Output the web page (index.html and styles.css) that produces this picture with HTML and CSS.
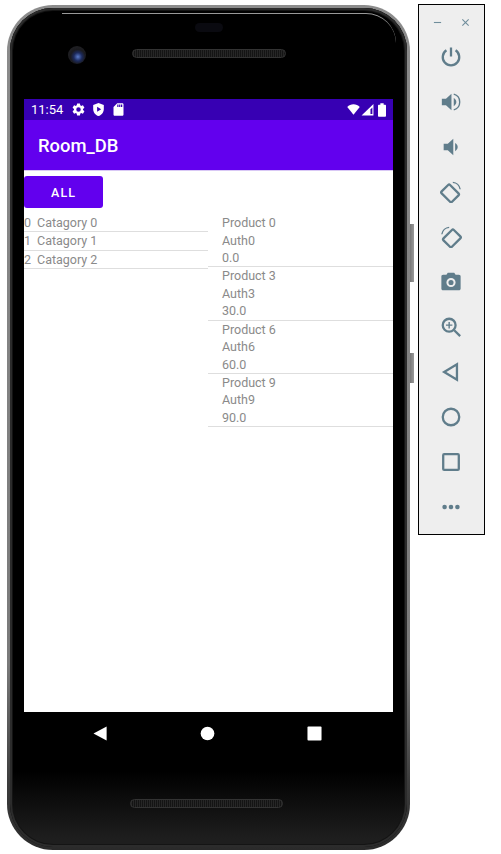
FILE: index.html

```html
<!DOCTYPE html>
<html>
<head>
<meta charset="UTF-8">
<title>Room_DB</title>
<link rel="stylesheet" href="styles.css">
</head>
<body>

	<div class="phone">
		<div class="edge-top"></div>
		<div class="side-key key-power"></div>
		<div class="side-key key-volume"></div>
		<div class="sensor"></div>
		<div class="camera"></div>
		<div class="speaker speaker-top"></div>

		<div class="screen">
			<div class="statusbar">
				<span class="clock">11:54</span>
				<svg class="st" viewBox="0 0 24 24"><path d="M19.14 12.94c.04-.3.06-.61.06-.94s-.02-.64-.07-.94l2.03-1.58a.49.49 0 0 0 .12-.61l-1.92-3.32a.49.49 0 0 0-.59-.22l-2.39.96c-.5-.38-1.03-.7-1.62-.94l-.36-2.54a.48.48 0 0 0-.48-.41h-3.84a.48.48 0 0 0-.47.41l-.36 2.54c-.59.24-1.13.57-1.62.94l-2.39-.96a.48.48 0 0 0-.59.22L2.74 8.87a.48.48 0 0 0 .12.61l2.03 1.58c-.05.3-.09.63-.09.94s.02.64.07.94l-2.03 1.58a.49.49 0 0 0-.12.61l1.92 3.32c.12.22.37.29.59.22l2.39-.96c.5.38 1.03.7 1.62.94l.36 2.54c.05.24.24.41.48.41h3.84c.24 0 .44-.17.47-.41l.36-2.54c.59-.24 1.13-.56 1.62-.94l2.39.96c.22.08.47 0 .59-.22l1.92-3.32a.48.48 0 0 0-.12-.61l-2.01-1.58zM12 15.6a3.6 3.6 0 1 1 0-7.2 3.6 3.6 0 0 1 0 7.2z"/></svg>
				<svg class="st" viewBox="0 0 24 24"><path fill-rule="evenodd" d="M12 1.500 3.500 4.800v6.400c0 5.200 3.600 10 8.500 11.300 4.900-1.300 8.500-6.100 8.500-11.300V4.800L12 1.500zM9.800 7.500v8l6.500-4-6.500-4z"/></svg>
				<svg class="st" viewBox="0 0 24 24"><path fill-rule="evenodd" d="M18 2h-8L4 8v12c0 1.100.9 2 2 2h12c1.100 0 2-.9 2-2V4c0-1.100-.9-2-2-2zM12 8h-2V4h2v4zm3 0h-2V4h2v4zm3 0h-2V4h2v4z"/></svg>
				<span class="st-space"></span>
				<svg class="st st-wifi" viewBox="0 0 24 24"><path d="M12 21.500 .5 7.500C3.500 4.300 7.500 2.500 12 2.500s8.500 1.800 11.500 5L12 21.500z"/></svg>
				<svg class="st st-signal" viewBox="0 0 24 24"><path d="M23 2v21H1L23 2z"/><path d="M17.500 12v8.500H21V8.500z" fill="#3700b3"/></svg>
				<svg class="st st-batt" viewBox="0 0 24 24"><path d="M16.500 4H14.500V2h-5v2H7.500C6.700 4 6 4.700 6 5.500v15C6 21.300 6.700 22 7.500 22h9c.8 0 1.500-.7 1.500-1.500v-15C18 4.700 17.300 4 16.500 4z"/></svg>
			</div>
			<div class="appbar">Room_DB</div>

			<div class="content">
				<button class="btn-all">ALL</button>
				<div class="lists">
					<div class="cat-list">
						<div class="cat-row"><span class="cat-id">0</span><span>Catagory 0</span></div>
						<div class="cat-row"><span class="cat-id">1</span><span>Catagory 1</span></div>
						<div class="cat-row"><span class="cat-id">2</span><span>Catagory 2</span></div>
					</div>
					<div class="prod-list">
						<div class="prod-row"><div>Product 0</div><div>Auth0</div><div>0.0</div></div>
						<div class="prod-row"><div>Product 3</div><div>Auth3</div><div>30.0</div></div>
						<div class="prod-row"><div>Product 6</div><div>Auth6</div><div>60.0</div></div>
						<div class="prod-row"><div>Product 9</div><div>Auth9</div><div>90.0</div></div>
					</div>
				</div>
			</div>
		</div>

		<div class="navbar">
			<svg class="nav-ico" viewBox="0 0 16 16"><path d="M14.500 .5v15L.5 8z"/></svg>
			<svg class="nav-ico" viewBox="0 0 16 16"><circle cx="8" cy="8" r="7.300"/></svg>
			<svg class="nav-ico" viewBox="0 0 16 16"><rect x=".5" y=".5" width="15" height="15" rx="1"/></svg>
		</div>

		<div class="speaker speaker-bottom"></div>
	</div>

	<div class="tools">
		<div class="tools-head">
			<svg class="head-ico" viewBox="0 0 10 10"><path d="M1 5h8"/></svg>
			<svg class="head-ico" viewBox="0 0 10 10"><path d="M1.500 1.500l7 7M8.500 1.500l-7 7"/></svg>
		</div>
		<div class="tool"><svg viewBox="0 0 24 24"><path class="line" d="M12 1.500v10M7 4.700a9 9 0 1 0 10 0"/></svg></div>
		<div class="tool"><svg viewBox="0 0 24 24"><path d="M2 8.500v7h4.500l6 5.500V3L6.500 8.500H2z"/><path d="M15 7.500c1.700 1 2.800 2.600 2.800 4.500s-1.100 3.500-2.800 4.500z"/><path class="line thin" d="M15 3.500c3.800 1 6.500 4.500 6.500 8.500s-2.700 7.500-6.500 8.500"/></svg></div>
		<div class="tool"><svg viewBox="0 0 24 24"><path d="M4 8.500v7h4.500l6 5.500V3L8.500 8.500H4z"/><path d="M16.500 7.500c1.700 1 2.800 2.600 2.800 4.500s-1.100 3.500-2.800 4.500z"/></svg></div>
		<div class="tool"><svg viewBox="0 0 24 24"><rect class="line" x="4.500" y="5.500" width="13" height="16" rx="1.500" transform="rotate(-45 11 13.500)"/><path class="line thin" d="M14 1.500c4 .3 7.300 3.500 8 7.500"/></svg></div>
		<div class="tool"><svg viewBox="0 0 24 24"><rect class="line" x="6.500" y="5.500" width="13" height="16" rx="1.500" transform="rotate(45 13 13.500)"/><path class="line thin" d="M10 1.500c-4 .3-7.300 3.500-8 7.500"/></svg></div>
		<div class="tool"><svg viewBox="0 0 24 24"><path fill-rule="evenodd" d="M8.500 2 7 4H3.500C2.100 4 1.500 4.800 1.500 6v13c0 1.200.6 2 2 2h17c1.400 0 2-.8 2-2V6c0-1.200-.6-2-2-2H17l-1.500-2h-7zM12 7.500a5 5 0 1 1 0 10 5 5 0 0 1 0-10zm0 2.200a2.800 2.800 0 1 0 0 5.600 2.800 2.800 0 0 0 0-5.600z"/></svg></div>
		<div class="tool"><svg viewBox="0 0 24 24"><circle class="line" cx="10" cy="10" r="7"/><path class="line" d="M15.500 15.500l6.500 6.500"/><path class="line thin" d="M10 6.500v7M6.500 10h7"/></svg></div>
		<div class="tool"><svg viewBox="0 0 24 24"><path class="line" d="M18.500 3.500v17L4.500 12z"/></svg></div>
		<div class="tool"><svg viewBox="0 0 24 24"><circle class="line" cx="12" cy="12" r="9"/></svg></div>
		<div class="tool"><svg viewBox="0 0 24 24"><rect class="line" x="3.500" y="3.500" width="17" height="17" rx="1"/></svg></div>
		<div class="tool"><svg viewBox="0 0 24 24"><circle cx="5" cy="12" r="2.500"/><circle cx="12" cy="12" r="2.500"/><circle cx="19" cy="12" r="2.500"/></svg></div>
	</div>

</body>
</html>
```

FILE: styles.css

```css
html, body {
	margin: 0;
	padding: 0;
	background: #fff;
}

body {
	width: 501px;
	height: 854px;
	overflow: hidden;
	display: flex;
	align-items: flex-start;
	font-family: Roboto, "Liberation Sans", sans-serif;
}

/* phone body */
.phone {
	position: relative;
	box-sizing: border-box;
	width: 403px;
	height: 845px;
	margin: 5px 0 0 7px;
	padding: 91px 14px 0 14px;
	border: 3px solid transparent;
	border-radius: 46px;
	background:
		linear-gradient(#000 0, #000 91%, #1e1e1e 99%) padding-box,
		linear-gradient(#8c8c8c 0, #7a7a7a 78%, #3c3c3c 92%, #2a2a2a 100%) border-box;
	box-shadow: inset 0 0 0 2px #2c2c2c, inset 0 0 0 3px #141414;
}

.edge-top {
	position: absolute;
	left: 52px;
	right: 11px;
	top: 5px;
	height: 30px;
	box-sizing: border-box;
	border-top: 1px solid #999;
	border-radius: 0 30px 0 0;
}

.side-key {
	position: absolute;
	left: 400px;
	width: 4px;
	background: linear-gradient(90deg, #777, #999);
}

.key-power {
	top: 216px;
	height: 58px;
}

.key-volume {
	top: 345px;
	height: 30px;
}

.sensor {
	position: absolute;
	left: 185px;
	top: 15px;
	width: 28px;
	height: 9px;
	border-radius: 5px;
	background: #0a0a10;
}

.camera {
	position: absolute;
	left: 58px;
	top: 38px;
	width: 18px;
	height: 18px;
	border-radius: 50%;
	background: radial-gradient(circle at 55% 60%, #5a7ac8 0, #1c2a5c 28%, #1a1a1e 50%, #26262a 100%);
}

.speaker {
	position: absolute;
	box-sizing: border-box;
	height: 9px;
	border: 1px solid #333;
	border-radius: 5px;
	background: repeating-linear-gradient(90deg, #262626 0, #262626 1px, #141414 1px, #141414 2px);
}

.speaker-top {
	left: 122px;
	top: 41px;
	width: 154px;
}

.speaker-bottom {
	left: 120px;
	top: 791px;
	width: 153px;
}

/* device screen */
.screen {
	width: 369px;
	height: 613px;
	background: #fff;
	display: flex;
	flex-direction: column;
}

.statusbar {
	flex: none;
	height: 21px;
	padding: 0 3px 0 7px;
	background: #3700b3;
	color: #fff;
	display: flex;
	align-items: center;
	font-size: 13px;
}

.clock {
	margin-right: 8px;
}

.st {
	width: 15px;
	height: 15px;
	margin-right: 5px;
	fill: #fff;
}

.st-space {
	flex: 1;
}

.st-wifi, .st-signal {
	width: 13px;
	height: 13px;
	margin-right: 1px;
}

.st-signal {
	margin-right: 0;
}

.st-batt {
	width: 16px;
	height: 16px;
	margin-right: 0;
}

.appbar {
	flex: none;
	box-sizing: border-box;
	height: 51px;
	padding: 0 14px;
	background: #6200ee;
	border-bottom: 1px solid #d9c8f5;
	color: #fff;
	font-size: 18.400px;
	font-weight: 500;
	line-height: 52px;
}

.content {
	flex: 1;
	padding-top: 5px;
}

.btn-all {
	display: block;
	width: 79px;
	height: 32px;
	margin: 0;
	padding: 0;
	border: 0;
	border-radius: 3px;
	background: #6200ee;
	color: #fff;
	font-family: inherit;
	font-size: 12.500px;
	font-weight: 500;
	letter-spacing: 1px;
}

.lists {
	display: flex;
	margin-top: 6px;
	color: #8a8a8a;
	font-size: 12.500px;
}

.cat-list {
	width: 184px;
}

.prod-list {
	width: 185px;
}

.cat-row {
	box-sizing: border-box;
	height: 18.300px;
	display: flex;
	align-items: center;
	border-bottom: 1px solid #dedede;
}

.cat-id {
	width: 13px;
}

.prod-row {
	box-sizing: border-box;
	height: 53.300px;
	padding-left: 14px;
	border-bottom: 1px solid #dedede;
	line-height: 17.500px;
}

/* bottom nav keys */
.navbar {
	height: 42px;
	padding: 0 71px 0 69px;
	display: flex;
	align-items: center;
	justify-content: space-between;
}

.nav-ico {
	width: 15px;
	height: 15px;
	fill: #fff;
}

/* emulator tool panel */
.tools {
	box-sizing: border-box;
	width: 67px;
	height: 531px;
	margin: 4px 0 0 8px;
	padding-top: 10px;
	background: #eeeeee;
	border: 1px solid #000;
}

.tools-head {
	height: 14px;
	margin-bottom: 5px;
	padding: 0 14px;
	display: flex;
	justify-content: space-between;
	align-items: center;
}

.head-ico {
	width: 9px;
	height: 9px;
	fill: none;
	stroke: #6f8d9b;
	stroke-width: 1.200;
}

.tool {
	height: 45px;
	padding-right: 1px;
	display: flex;
	align-items: center;
	justify-content: center;
}

.tool svg {
	width: 22px;
	height: 22px;
	fill: #607d8b;
}

.tool .line {
	fill: none;
	stroke: #607d8b;
	stroke-width: 2.500;
}

.tool .thin {
	stroke-width: 1.500;
}
```
